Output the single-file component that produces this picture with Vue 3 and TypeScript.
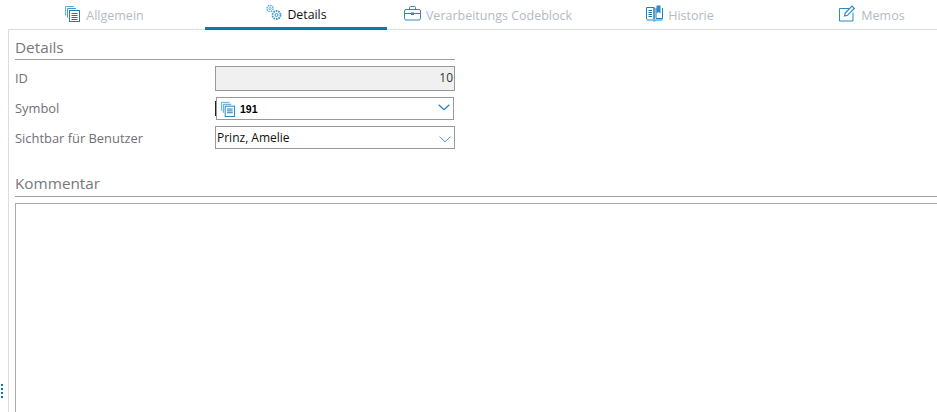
<script setup lang="ts">
const tabs = [
  { label: 'Allgemein', icon: 'docs', active: false },
  { label: 'Details', icon: 'gears', active: true },
  { label: 'Verarbeitungs Codeblock', icon: 'case', active: false },
  { label: 'Historie', icon: 'book', active: false },
  { label: 'Memos', icon: 'memo', active: false },
]
</script>

<template>
  <div class="page">
    <div class="grip"><i></i><i></i><i></i><i></i></div>
    <div class="tabs">
      <div v-for="t in tabs" :key="t.label" class="tab" :class="{ active: t.active }">
        <svg class="ico" viewBox="0 0 17 17" fill="none" stroke="#2a8ac4" stroke-width="1">
          <template v-if="t.icon === 'docs'">
            <path d="M1.5 10.5V1.5H10" stroke="#5cb0e0" />
            <path d="M3.5 12.5V3.5H12" stroke="#3c9bd4" />
            <rect x="5.5" y="5.5" width="10" height="11" stroke="#1f7db8" />
            <path d="M7.5 8.5h6M7.5 10.5h6M7.5 12.5h6M7.5 14.5h6" stroke="#1f6f9f" />
          </template>
          <template v-else-if="t.icon === 'gears'">
            <circle cx="5" cy="4.5" r="3" stroke="#6cb6e0" stroke-dasharray="1.6 .7" stroke-width="1.6" />
            <circle cx="5" cy="4.5" r="1" stroke="#6cb6e0" />
            <circle cx="11.5" cy="11" r="4" stroke="#3c98cf" stroke-dasharray="1.7 .8" stroke-width="1.8" />
            <circle cx="11.5" cy="11" r="1.5" stroke="#3c98cf" />
          </template>
          <template v-else-if="t.icon === 'case'">
            <rect x=".5" y="4.5" width="16" height="10.5" rx="1.5" />
            <path d="M5.5 4.5V2.5q0-1 1-1h4q1 0 1 1v2M.5 8.5h16" />
            <rect x="7" y="7.5" width="3" height="2.5" fill="#2a8ac4" stroke="none" />
          </template>
          <template v-else-if="t.icon === 'book'">
            <path d="M.5 14V2.5H8V14M8 14V2.5" stroke="#1f7db8" />
            <path d="M2.5 5.5h3.5M2.5 7.5h3.5M2.5 9.5h3.5M2.5 11.5h3.5" stroke="#1f6f9f" />
            <path d="M10 3v10.5h6.5V3" stroke="#1f7db8" />
            <path d="M10.5 .5h4v8l-2-1.5-2 1.5z" fill="#2a8ac4" stroke="none" />
            <path d="M.5 15h16" stroke="#5cb0e0" stroke-width="1.5" />
            <path d="M7.5 16h2" stroke="#2a8ac4" />
          </template>
          <template v-else>
            <path d="M10 3.5H.5v12.5H14V7.5" />
            <path d="M5.5 11l.7-3L13 1.2l2.3 2.3L8.5 10.3z" stroke-width="1.2" />
          </template>
        </svg>
        <span class="tab-label">{{ t.label }}</span>
      </div>
    </div>

    <div class="content">
      <h2 class="section">Details</h2>
      <div class="form">
        <label class="lbl up">ID</label>
        <div class="field readonly">10</div>

        <label class="lbl up">Symbol</label>
        <div class="field narrow">
          <span class="caret"></span>
          <svg class="sym" viewBox="0 0 17 17" fill="none" stroke-width="1">
            <path d="M1.5 10.5V1.5H10" stroke="#5cb0e0" />
            <path d="M3.5 12.5V3.5H12" stroke="#3c9bd4" />
            <rect x="5.5" y="5.5" width="10" height="11" stroke="#1f7db8" />
            <path d="M7.5 8.5h6M7.5 10.5h6M7.5 12.5h6" stroke="#1f6f9f" />
          </svg>
          <b class="num">191</b>
          <svg class="chev" viewBox="0 0 12 7" fill="none" stroke="#2080b8" stroke-width="1.2"><path d="M.7.8L6 5.8 11.3.8" /></svg>
        </div>

        <label class="lbl">Sichtbar für Benutzer</label>
        <div class="field plain">
          <span class="val">Prinz, Amelie</span>
          <svg class="chev low" viewBox="0 0 12 7" fill="none" stroke="#4a98c8" stroke-width="1"><path d="M.5.7L6 5.8 11.5.7" /></svg>
        </div>
      </div>

      <h2 class="section wide">Kommentar</h2>
      <div class="comment"></div>
    </div>
  </div>
</template>

<style>
html, body { margin: 0; background: #fff; overflow: hidden; }
</style>

<style scoped>
.page {
  position: relative;
  width: 937px;
  height: 412px;
  overflow: hidden;
  background: #fff;
  font-family: "Open Sans", "Liberation Sans", sans-serif;
  display: flex;
  flex-direction: column;
}
.grip {
  position: absolute;
  left: 1px;
  top: 384px;
  display: flex;
  flex-direction: column;
  gap: 2px;
}
.grip i { width: 2px; height: 2px; background: #0f76b0; display: block; }
.tabs {
  margin-left: 8px;
  height: 29px;
  padding-left: 5px;
  border-bottom: 1px solid #dcdcdc;
  display: flex;
  gap: 10px;
  flex: none;
}
.tab {
  flex: 0 0 182px;
  height: 30px;
  box-sizing: border-box;
  display: flex;
  align-items: center;
  justify-content: center;
  gap: 5px;
  padding-top: 1px;
  padding-bottom: 1px;
  font-size: 12.5px;
  color: #b4bac4;
}
.tab.active {
  color: #111;
  border-bottom: 3px solid #0f76b0;
  padding-bottom: 0;
}
.tab.active .tab-label { font-size: 12.3px; }
.ico { width: 17px; height: 17px; flex: none; margin-top: -3px; }
.content {
  flex: 1;
  margin-left: 8px;
  border-left: 1px solid #dcdcdc;
  padding: 7px 0 0 6px;
  min-height: 0;
}
.section {
  margin: 0;
  width: 440px;
  height: 23px;
  box-sizing: border-box;
  border-bottom: 1px solid #a0a0a0;
  font-size: 15.3px;
  font-weight: 400;
  line-height: 20px;
  color: #77777c;
}
.section.wide { width: auto; margin-top: 24px; height: 24px; line-height: 21px; }
.form {
  display: grid;
  width: 440px;
  grid-template-columns: 200px 240px;
  grid-template-rows: 25px 23px 23px;
  row-gap: 6px;
  margin-top: 6px;
  align-items: center;
}
.lbl { font-size: 12.9px; color: #6f7076; }
.lbl.up { padding-bottom: 2px; }
.field {
  box-sizing: border-box;
  height: 23px;
  border: 1px solid #999;
  display: flex;
  align-items: center;
  font-size: 12px;
  color: #111;
  position: relative;
}
.readonly {
  height: 25px;
  justify-content: flex-end;
  padding-right: 1px;
  padding-bottom: 2px;
  background: #f0f0f0;
  color: #333;
}
.narrow { margin: 0 1px; }
.caret {
  position: absolute;
  left: -2px;
  top: 3px;
  width: 1px;
  height: 15px;
  background: #222;
}
.sym { width: 16px; height: 16px; margin-left: 3px; flex: none; }
.num { margin-left: 4px; font-size: 10.5px; font-family: "Liberation Sans", sans-serif; font-weight: 700; color: #000; }
.val { margin-left: 1px; }
.chev { width: 12px; height: 7px; position: absolute; right: 3px; top: 6px; }
.chev.low { top: 9px; }
.comment {
  height: 300px;
  margin-top: 6px;
  border: 1px solid #aaa;
  border-right: none;
}
</style>
